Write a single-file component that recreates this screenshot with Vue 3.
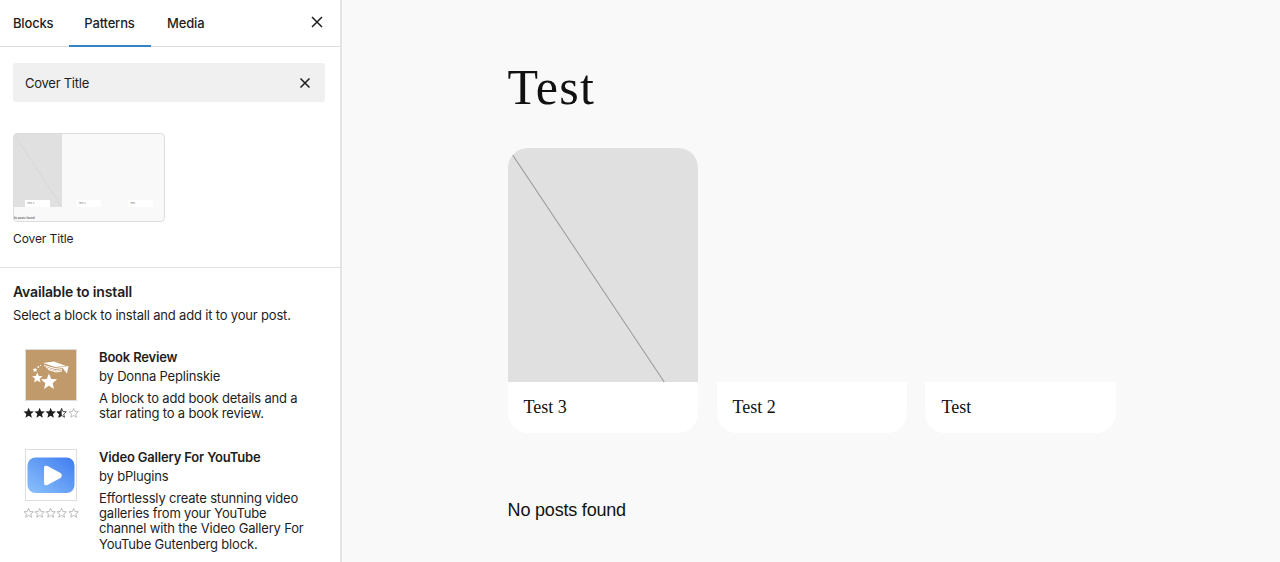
<template>
  <div class="editor">
    <aside class="inserter">
      <div class="tabs">
        <button class="tab">Blocks</button>
        <button class="tab active">Patterns</button>
        <button class="tab">Media</button>
        <svg class="close" width="24" height="24" viewBox="0 0 24 24"><path d="M7 7l10 10M17 7L7 17" /></svg>
      </div>

      <div class="search">
        <span>Cover Title</span>
        <svg class="close-small" width="24" height="24" viewBox="0 0 24 24"><path d="M7.5 7.5l9 9M16.5 7.5l-9 9" /></svg>
      </div>

      <div class="pattern">
        <div class="thumb">
          <div class="thumb-img">
            <svg width="100%" height="100%" viewBox="0 0 48 73" preserveAspectRatio="none"><line x1="0" y1="0" x2="48" y2="73" /></svg>
          </div>
          <div class="thumb-row">
            <div v-for="c in miniCaptions" :key="c" class="thumb-cap">{{ c }}</div>
          </div>
          <div class="thumb-foot">No posts found</div>
        </div>
        <div class="pattern-label">Cover Title</div>
      </div>

      <div class="install">
        <h2>Available to install</h2>
        <p class="sub">Select a block to install and add it to your post.</p>

        <div v-for="item in plugins" :key="item.title" class="plugin">
          <div class="plugin-left">
            <div class="plugin-icon">
              <svg v-if="item.icon === 'book'" width="50" height="50" viewBox="0 0 50 50">
                <rect width="50" height="50" fill="#c19a6b" />
                <path d="M17 13 L28 11.5 L40 16 L29 17 Z" fill="#fff" />
                <path d="M18 15.5 L29 18.5 L37 17.5 M20 17.5 L29.5 20.5 L36 19.5 M22 19.5 L30 22 L36 21" fill="none" stroke="#fff" stroke-width="1" />
                <path d="M36 17 L42.5 16 L41 23.5 L38.5 20.5 Z" fill="#fff" />
                <polygon :points="starPoints(23, 32, 8.5)" fill="#fff" />
                <polygon :points="starPoints(11.3, 28, 5.5)" fill="#fff" />
                <polygon :points="starPoints(9, 20, 2.6)" fill="#fff" />
                <circle cx="12.3" cy="17" r=".9" fill="#fff" />
                <circle cx="14.5" cy="15.5" r=".6" fill="#fff" />
              </svg>
              <svg v-else width="50" height="50" viewBox="0 0 50 50">
                <defs>
                  <linearGradient id="yt" x1="0" y1="1" x2="1" y2="0">
                    <stop offset="0" stop-color="#8cc2fb" />
                    <stop offset="1" stop-color="#3f7cf0" />
                  </linearGradient>
                </defs>
                <rect width="50" height="50" fill="#fff" />
                <rect x="1.5" y="7.5" width="47" height="35.5" rx="8" fill="url(#yt)" />
                <path d="M19 18 Q19 16 21 17 L34 24 Q35.5 25.5 34 27 L21 34 Q19 35 19 33 Z" fill="#fff" stroke="#fff" stroke-width="2" stroke-linejoin="round" />
              </svg>
            </div>
            <div class="stars">
              <svg v-for="n in 5" :key="n" width="12" height="12" viewBox="0 0 12 12">
                <polygon v-if="n <= item.rating" :points="starPoints(6, 6.3, 5.8)" fill="#1e1e1e" />
                <template v-else-if="n - 0.5 === item.rating">
                  <polygon :points="starPoints(6, 6.3, 5.2)" fill="none" stroke="#1e1e1e" stroke-width=".8" />
                  <path d="M6 .9 L4.4 4.6 L.9 4.8 L3.4 7.5 L2.8 10.9 L6 9.2 Z" fill="#1e1e1e" />
                </template>
                <polygon v-else :points="starPoints(6, 6.3, 5.2)" fill="none" stroke="#aaa" stroke-width=".8" />
              </svg>
            </div>
          </div>
          <div class="plugin-text">
            <div class="plugin-title">{{ item.title }}</div>
            <div class="plugin-by">{{ item.author }}</div>
            <div class="plugin-desc">{{ item.desc }}</div>
          </div>
        </div>
      </div>
    </aside>

    <main class="canvas">
      <div class="content">
        <h1>Test</h1>
        <div class="cards">
          <div v-for="(card, i) in cards" :key="card" class="card">
            <div class="card-img" :class="{ filled: i === 0 }">
              <svg v-if="i === 0" width="100%" height="100%" viewBox="0 0 190 234" preserveAspectRatio="none"><line x1="0" y1="0" x2="156" y2="234" /></svg>
            </div>
            <div class="card-cap">{{ card }}</div>
          </div>
        </div>
        <p class="none">No posts found</p>
      </div>
    </main>
  </div>
</template>

<script setup>
const cards = ['Test 3', 'Test 2', 'Test']
const miniCaptions = ['Test 3', 'Test 2', 'Test']

const plugins = [
  {
    title: 'Book Review',
    author: 'by Donna Peplinskie',
    desc: 'A block to add book details and a star rating to a book review.',
    icon: 'book',
    rating: 3.5
  },
  {
    title: 'Video Gallery For YouTube',
    author: 'by bPlugins',
    desc: 'Effortlessly create stunning video galleries from your YouTube channel with the Video Gallery For YouTube Gutenberg block.',
    icon: 'video',
    rating: 0
  }
]

// five pointed star, used for ratings and in the book icon
function starPoints(cx, cy, r) {
  const pts = []
  for (let i = 0; i < 10; i++) {
    const rad = i % 2 === 0 ? r : r * 0.45
    const a = -Math.PI / 2 + (i * Math.PI) / 5
    pts.push((cx + rad * Math.cos(a)).toFixed(2) + ',' + (cy + rad * Math.sin(a)).toFixed(2))
  }
  return pts.join(' ')
}
</script>

<style>
html, body {
  margin: 0;
  height: 562px;
  overflow: hidden;
}
</style>

<style scoped>
.editor {
  display: flex;
  height: 562px;
  overflow: hidden;
  font-family: Inter, "Liberation Sans", sans-serif;
  color: #1e1e1e;
}
.inserter {
  width: 340px;
  flex: none;
  background: #fff;
  border-right: 2px solid #e4e4e4;
  overflow: hidden;
  letter-spacing: -0.18px;
}
.tabs {
  display: flex;
  align-items: stretch;
  height: 46px;
  border-bottom: 1px solid #dcdcdc;
}
.tab {
  background: none;
  border: 0;
  padding: 0 13px 2px;
  height: 47px;
  margin: 0;
  font: 500 13px Inter, "Liberation Sans", sans-serif;
  letter-spacing: -0.18px;
  color: #1e1e1e;
}
.tab.active {
  padding: 0 16.5px 2px 15px;
  margin-left: 3px;
  box-shadow: inset 0 -2px 0 #3582c4;
}
.tab:nth-child(3) {
  padding: 0 16px 2px;
}
.close {
  margin-left: auto;
  margin-right: 11px;
  align-self: center;
  margin-top: -2px;
}
.close path, .close-small path {
  fill: none;
  stroke: #1e1e1e;
  stroke-width: 1.5;
}
.search {
  display: flex;
  align-items: center;
  justify-content: space-between;
  margin: 16px 15px 0 13px;
  height: 39px;
  padding: 0 8px 0 12px;
  background: #f0f0f0;
  border-radius: 2px;
  font-size: 13px;
  letter-spacing: -0.25px;
}
.pattern {
  padding: 31px 13px 0;
  box-sizing: border-box;
  height: 166px;
  border-bottom: 1px solid #e0e0e0;
}
.thumb {
  width: 152px;
  height: 89px;
  box-sizing: border-box;
  border: 1px solid #ddd;
  border-radius: 4px;
  background: #f9f9f9;
  position: relative;
  overflow: hidden;
}
.thumb-img {
  position: absolute;
  left: 0;
  top: 0;
  width: 48px;
  height: 73px;
  background: #e0e0e0;
}
.thumb-img svg {
  display: block;
}
.thumb-img line {
  stroke: #cfcfcf;
  stroke-width: 0.5;
}
.thumb-row {
  display: flex;
  gap: 27px;
  padding: 66px 0 0 11px;
  position: relative;
}
.thumb-cap {
  width: 24.5px;
  height: 7px;
  background: #fff;
  font-size: 2.5px;
  line-height: 7px;
  padding-left: 2px;
  box-sizing: border-box;
  color: #777;
  letter-spacing: 0;
}
.thumb-foot {
  font-size: 3px;
  line-height: 4px;
  margin-top: 9px;
  margin-left: -1px;
  color: #333;
  letter-spacing: 0;
  position: relative;
}
.pattern-label {
  margin-top: 9px;
  font-size: 12px;
  line-height: 16px;
  letter-spacing: -0.1px;
}
.install {
  padding: 15px 13px 0;
}
h2 {
  margin: 0;
  font-size: 14px;
  font-weight: 600;
  line-height: 18px;
  letter-spacing: -0.15px;
}
.sub {
  margin: 5px 0 0;
  font-size: 13px;
  line-height: 18px;
}
.plugin {
  display: flex;
  gap: 20px;
  height: 100px;
  padding: 0 12px;
}
.sub + .plugin {
  margin-top: 25px;
}
.plugin-left {
  width: 54px;
  flex: none;
}
.plugin-icon {
  width: 50px;
  height: 50px;
  border: 1px solid #ddd;
}
.plugin-icon svg {
  display: block;
}
.stars {
  display: flex;
  margin-top: 6px;
  margin-left: -2.5px;
}
.plugin-text {
  font-size: 13px;
  line-height: 16px;
  width: 210px;
  flex: none;
}
.plugin-title {
  font-weight: 600;
}
.plugin-by {
  margin-top: 3px;
}
.plugin-desc {
  margin-top: 7px;
  line-height: 15.2px;
}
.canvas {
  flex: 1;
  background: #f9f9f9;
  min-width: 0;
}
.content {
  width: 608.2px;
  margin-left: 165.6px;
}
h1 {
  margin: 0;
  padding-top: 59px;
  font: 400 50px/56px "Liberation Serif", serif;
  letter-spacing: 1.2px;
  color: #111;
}
.cards {
  display: grid;
  grid-template-columns: repeat(3, 1fr);
  gap: 18.6px;
  margin-top: 33px;
}
.card {
  border-radius: 20px;
  overflow: hidden;
}
.card-img {
  height: 234px;
}
.card-img.filled {
  background: #e0e0e0;
}
.card-img svg {
  display: block;
}
.card-img line {
  stroke: #999;
  stroke-width: 1;
}
.card-cap {
  height: 51px;
  background: #fff;
  padding-left: 16px;
  font: 400 18px/50px "Liberation Serif", serif;
  color: #111;
}
.none {
  margin: 66px 0 0;
  font: 400 18px/22px "Liberation Sans", sans-serif;
  letter-spacing: -0.2px;
  color: #111;
}
</style>
